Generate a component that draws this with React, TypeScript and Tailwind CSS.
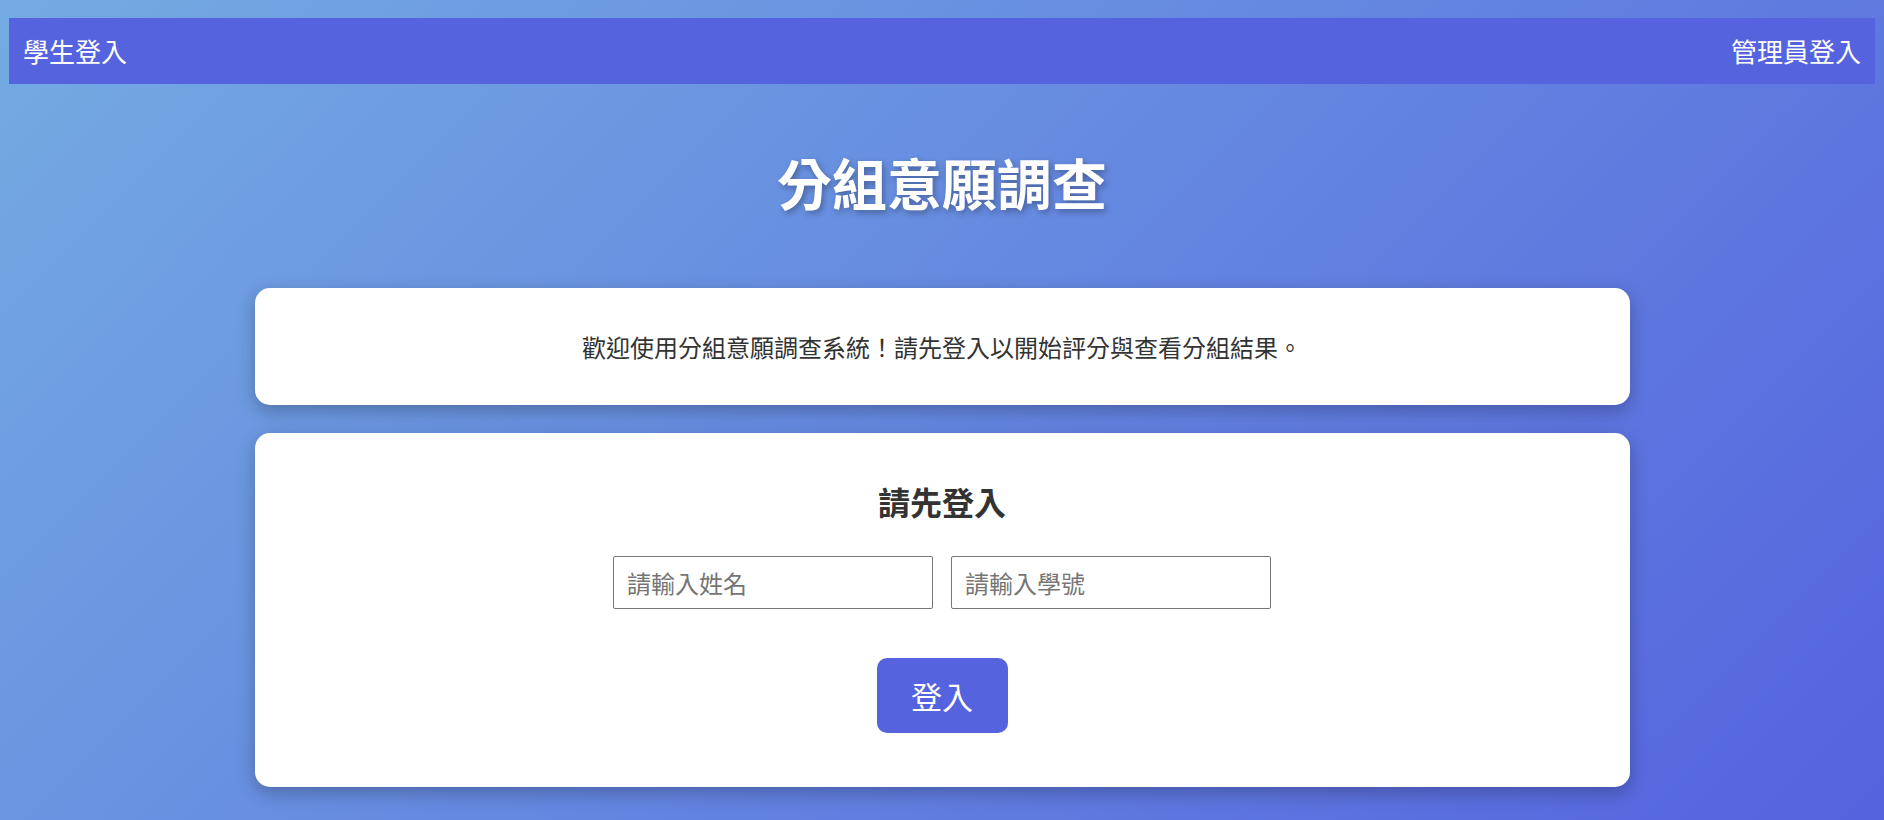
export default function App() {
  return (
    <div
      className="min-h-screen w-full bg-[linear-gradient(135deg,#74abe2,#5563de)] px-[9px] pt-[18px] pb-[33px] text-[#333]"
      style={{ fontFamily: '"Noto Sans CJK TC", "Noto Sans", sans-serif' }}
    >
      {/* Top bar */}
      <header className="flex h-[66px] items-center justify-between bg-[#5563de] px-[14px] text-[26px] leading-none text-white">
        <span>學生登入</span>
        <span>管理員登入</span>
      </header>

      {/* Title */}
      <h1 className="mt-[64px] text-center text-[55px] font-bold leading-[66px] text-white [text-shadow:2px_3px_6px_rgba(0,0,0,0.3)]">
        分組意願調查
      </h1>

      {/* Welcome card */}
      <section className="mx-auto mt-[74px] flex h-[117px] w-[1375px] items-center justify-center rounded-[15px] bg-white shadow-[0_6px_18px_rgba(0,0,0,0.25)]">
        <p className="text-[24px] leading-none">
          歡迎使用分組意願調查系統！請先登入以開始評分與查看分組結果。
        </p>
      </section>

      {/* Login card */}
      <section className="mx-auto mt-[28px] flex h-[354px] w-[1375px] flex-col items-center rounded-[15px] bg-white pt-[49px] shadow-[0_6px_18px_rgba(0,0,0,0.25)]">
        <h2 className="text-[32px] font-bold leading-[38px] text-[#333]">請先登入</h2>
        <div className="mt-[36px] flex gap-[18px]">
          <input
            type="text"
            placeholder="請輸入姓名"
            className="h-[53px] w-[320px] rounded-[2px] border border-[#767676] px-[13px] text-[24px] text-[#333] placeholder:text-[#757575]"
          />
          <input
            type="text"
            placeholder="請輸入學號"
            className="h-[53px] w-[320px] rounded-[2px] border border-[#767676] px-[13px] text-[24px] text-[#333] placeholder:text-[#757575]"
          />
        </div>
        <button className="mt-[49px] h-[75px] w-[131px] rounded-[10px] bg-[#5563de] text-[31px] leading-none text-white">
          登入
        </button>
      </section>
    </div>
  )
}
